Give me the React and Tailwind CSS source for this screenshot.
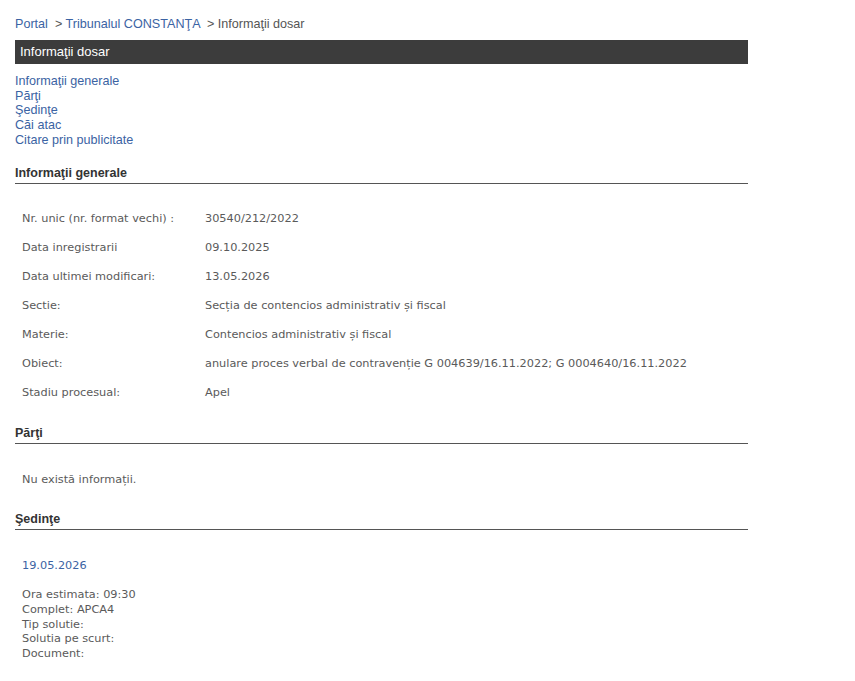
export default function App() {
  const rows = [
    ["Nr. unic (nr. format vechi) :", "30540/212/2022"],
    ["Data inregistrarii", "09.10.2025"],
    ["Data ultimei modificari:", "13.05.2026"],
    ["Sectie:", "Secția de contencios administrativ și fiscal"],
    ["Materie:", "Contencios administrativ și fiscal"],
    ["Obiect:", "anulare proces verbal de contravenție G 004639/16.11.2022; G 0004640/16.11.2022"],
    ["Stadiu procesual:", "Apel"],
  ];
  const data = { fontFamily: '"DejaVu Sans", Verdana, sans-serif' };
  const arial = { fontFamily: '"Liberation Sans", Arial, sans-serif' };

  return (
    <div className="min-h-[681px] bg-white text-[#555]" style={arial}>
      <div className="w-[733px] ml-[15px] pt-[16px]">
        {/* breadcrumb */}
        <div className="text-[12.6px] leading-[16px] text-[#555] whitespace-pre">
          <a className="text-[#3b63a3]">Portal</a>
          <span>{"  > "}</span>
          <a className="text-[#3b63a3]">Tribunalul CONSTANŢA</a>
          <span>{"  > Informaţii dosar"}</span>
        </div>

        {/* title bar */}
        <div className="mt-[8px] h-[24px] bg-[#3c3c3c] text-white text-[13px] leading-[24px] pl-[5px]">
          Informaţii dosar
        </div>

        {/* anchors */}
        <div className="mt-[10px] flex flex-col text-[12.6px] leading-[14.7px] text-[#3b63a3]">
          <a>Informaţii generale</a>
          <a>Părţi</a>
          <a>Şedinţe</a>
          <a>Căi atac</a>
          <a>Citare prin publicitate</a>
        </div>

        {/* general info */}
        <div className="mt-[17px] border-b border-[#555] text-[12.5px] font-bold text-[#333] leading-[16px] pb-[2px]">
          Informaţii generale
        </div>
        <div className="pt-[28px] pl-[7px] text-[11.3px] text-[#5a5a5a]" style={data}>
          {rows.map(([k, v]) => (
            <div key={k} className="flex h-[29px] items-start leading-[14px]">
              <div className="w-[183px] shrink-0">{k}</div>
              <div>{v}</div>
            </div>
          ))}
        </div>

        <div className="mt-[10px] border-b border-[#555] text-[12.5px] font-bold text-[#333] leading-[16px] pb-[2px]">
          Părţi
        </div>
        <div className="pt-[29px] pl-[7px] text-[11.3px] leading-[14px] text-[#5a5a5a]" style={data}>
          Nu există informații.
        </div>

        <div className="mt-[24px] border-b border-[#555] text-[12.5px] font-bold text-[#333] leading-[16px] pb-[2px]">
          Şedinţe
        </div>
        <div className="pt-[29px] pl-[7px] text-[11.3px] leading-[14.7px] text-[#5a5a5a]" style={data}>
          <div className="text-[#3b63a3]">19.05.2026</div>
          <div className="mt-[15px]">
            <div>Ora estimata: 09:30</div>
            <div>Complet: APCA4</div>
            <div>Tip solutie:</div>
            <div>Solutia pe scurt:</div>
            <div>Document:</div>
          </div>
        </div>
      </div>
    </div>
  );
}
